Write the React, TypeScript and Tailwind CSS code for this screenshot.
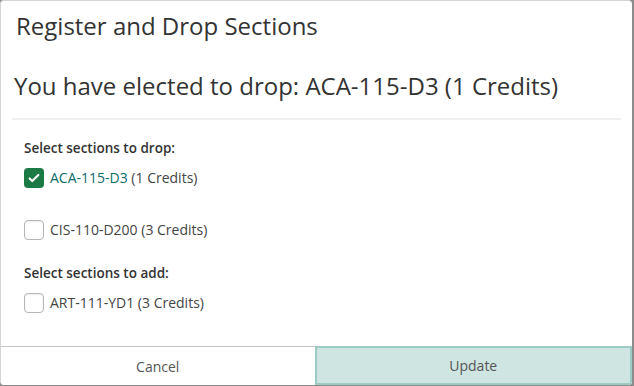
import { useState } from "react";

const sections = {
  drop: [
    { id: "ACA-115-D3", credits: 1, checked: true },
    { id: "CIS-110-D200", credits: 3, checked: false },
  ],
  add: [{ id: "ART-111-YD1", credits: 3, checked: false }],
};

const Check = ({ on }: { on: boolean }) =>
  on ? (
    <span className="flex h-5 w-5 shrink-0 items-center justify-center rounded-[4px] bg-[#1c7a45]">
      <svg viewBox="0 0 16 16" className="h-3.5 w-3.5" fill="none">
        <path d="M3 8.5l3 3 7-7" stroke="white" strokeWidth="2.4" strokeLinecap="round" strokeLinejoin="round" />
      </svg>
    </span>
  ) : (
    <span className="h-5 w-5 shrink-0 rounded-[4px] border border-[#b5b5b5] bg-white shadow-[inset_0_1px_2px_rgba(0,0,0,0.08)]" />
  );

const Row = ({ id, credits, checked }: { id: string; credits: number; checked: boolean }) => {
  const [on, setOn] = useState(checked);
  return (
    <label className="flex cursor-pointer items-center gap-[6px] text-[14px] leading-5" onClick={() => setOn(!on)}>
      <Check on={on} />
      <span>
        <span className={on ? "text-[#0b6b6b]" : "text-[#444]"}>{id}</span>
        <span className="text-[#444]"> ({credits} Credits)</span>
      </span>
    </label>
  );
};

export default function App() {
  return (
    <div className="h-[386px] w-[634px] bg-[#8c8c8c]" style={{ fontFamily: '"Open Sans", sans-serif' }}>
      <div className="flex h-[385px] w-[632px] flex-col overflow-hidden rounded-[4px] border-t border-l border-[#d4d4d4] bg-white text-[#333]">
        <h1 className="pl-[15px] pt-[10px] text-[24px] leading-[30px]">Register and Drop Sections</h1>
        <h2 className="mt-[29px] pl-[13px] text-[24px] leading-[32px]">
          You have elected to drop: ACA-115-D3 (1 Credits)
        </h2>
        <div className="mx-[11px] mt-[16px] h-[2px] bg-[#efefef]" />
        <div className="flex flex-1 flex-col pl-[23px] pt-[19px]">
          <div className="text-[13.5px] font-semibold leading-[18px]">Select sections to drop:</div>
          <div className="mt-[11px] flex flex-col gap-[32px]">
            {sections.drop.map((s) => (
              <Row key={s.id} {...s} />
            ))}
          </div>
          <div className="mt-[24px] text-[13.5px] font-semibold leading-[18px]">Select sections to add:</div>
          <div className="mt-[11px]">
            {sections.add.map((s) => (
              <Row key={s.id} {...s} />
            ))}
          </div>
        </div>
        <div className="flex h-[39px] text-[14px] text-[#555]">
          <button className="flex-1 border-t border-[#c4c4c4] bg-white">Cancel</button>
          <button className="flex-1 border-2 border-[#9dcac3] bg-[#cfe5e1]">Update</button>
        </div>
      </div>
    </div>
  );
}
